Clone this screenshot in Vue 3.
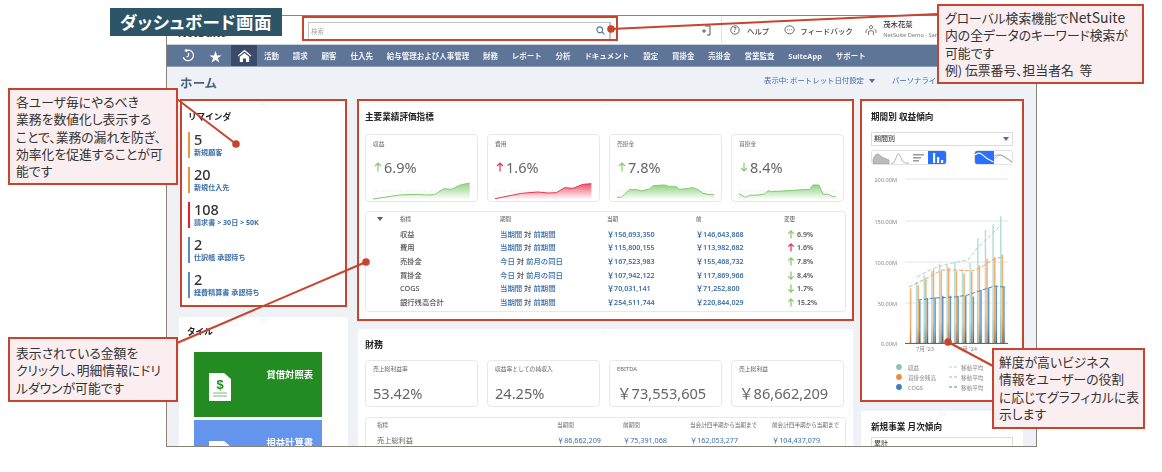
<script setup>
const nav = ['活動','請求','顧客','仕入先','給与管理および人事管理','財務','レポート','分析','ドキュメント','設定','買掛金','売掛金','営業監査','SuiteApp','サポート']
const reminders = [
  { n: '5', label: '新規顧客', color: '#f0923c' },
  { n: '20', label: '新規仕入先', color: '#f0923c' },
  { n: '108', label: '請求書 > 30日 > 50K', color: '#ea1c2a' },
  { n: '2', label: '仕訳帳 承認待ち', color: '#5a8db5' },
  { n: '2', label: '経費精算書 承認待ち', color: '#5a8db5' },
]
const G = '#7fcb6e', R = '#e8354f'
const kpis = [
  { label: '収益', value: '6.9%', dir: 'up', color: G, pts: [[55,212],[135,200],[190,198],[215,200],[240,199],[268,181],[290,183],[320,169],[345,164]] },
  { label: '費用', value: '1.6%', dir: 'up', color: R, pts: [[55,211],[134,195],[184,191],[214,194],[239,193],[264,178],[289,180],[319,168],[344,166]] },
  { label: '売掛金', value: '7.8%', dir: 'up', color: G, pts: [[55,207],[68,207],[78,197],[93,184],[116,184],[128,188],[153,182],[163,172],[198,170],[213,175],[233,175],[243,183],[263,181],[283,178],[298,184],[313,195],[328,198],[346,199]] },
  { label: '買掛金', value: '8.4%', dir: 'down', color: G, pts: [[55,196],[74,207],[87,201],[112,200],[132,197],[142,187],[152,190],[202,187],[267,183],[277,170],[295,170],[307,197],[324,198],[334,204],[345,205]] },
]
const line = p => p.map(a => a.join(',')).join(' ')
const area = p => line(p) + ` ${p[p.length-1][0]},214 ${p[0][0]},214`
const rows = [
  ['収益','当期間','前期間','￥156,693,350','￥146,643,868','up',G,'6.9%'],
  ['費用','当期間','前期間','￥115,800,155','￥113,982,682','up',R,'1.6%'],
  ['売掛金','今日','前月の同日','￥167,523,983','￥155,468,732','up',G,'7.8%'],
  ['買掛金','今日','前月の同日','￥107,942,122','￥117,869,966','down',G,'8.4%'],
  ['COGS','当期間','前期間','￥70,031,141','￥71,252,800','down',G,'1.7%'],
  ['銀行残高合計','当期間','前期間','￥254,511,744','￥220,844,029','up',G,'15.2%'],
]
const finance = [
  { label: '売上総利益率', value: '53.42%' },
  { label: '収益率としての純収入', value: '24.25%' },
  { label: 'EBITDA', value: '￥73,553,605' },
  { label: '売上総利益', value: '￥86,662,209' },
]
const grid = [[179,'200.00M'],[221,'150.00M'],[262,'100.00M'],[303,'50.00M']]
const base = 343.3, scale = 0.82
const orange = [67,71,78,90,88,92,88,85,87,95,103,105,108]
const teal = [0,75,83,88,97,95,99,90,98,128,138,145,155]
const blue = [0,52,55,56,58,58,58,58,57,65,68,70,70]
const bar = (arr, off) => arr.map((v, i) => ({ x: 910 + 7.65 * i + off, y: base - v * scale, h: v * scale }))
const series = [
  { id: 'bt', top: '#b4dfd8', low: '#8fb8b2', bars: bar(teal, -1.8) },
  { id: 'bo', top: '#f4ad70', low: '#b8763f', bars: bar(orange, -.2) },
  { id: 'bb', top: '#5b9aca', low: '#35607f', bars: bar(blue, 1.4) },
]
const avgs = [
  { c: '#a5d8d0', p: '917,277 932,269 948,264 968,260 978,247 988,238 1000,226' },
  { c: '#f2a163', p: '909,287 925,279 942,270 955,270 972,271 982,267 992,260 1002,257' },
  { c: '#4a88bb', p: '918,300 935,298 955,297 968,295 982,290 995,286 1003,287' },
]
const legend = [
  { y: 367, c: '#8cc4bb', t: '収益', d: '#a5d8d0' },
  { y: 377, c: '#e98d45', t: '買掛金残高', d: '#f2a163' },
  { y: 387, c: '#3f7fb3', t: 'COGS', d: '#4a88bb' },
]
</script>

<template>
  <div class="root">
    <div class="screen">
      <header class="top">
        <div class="logo">NetSuite</div>
        <div class="search">
          <span class="ph">検索</span>
          <svg width="9" height="9" viewBox="0 0 10 10"><circle cx="4.2" cy="4.2" r="3.2" fill="none" stroke="#4f7199" stroke-width="1.2"/><path d="M6.6 6.6 9.4 9.4" stroke="#4f7199" stroke-width="1.3"/></svg>
        </div>
        <div class="actions">
          <svg class="recent" width="11" height="11" viewBox="0 0 11 11" fill="none" stroke="#444" stroke-width=".9"><path d="M4 1h5v9H6M1 6h4M3 4v4"/></svg>
          <span class="divider"></span>
          <svg width="10" height="10" viewBox="0 0 10 10"><circle cx="5" cy="5" r="4.2" fill="none" stroke="#444" stroke-width=".8"/><text x="5" y="7.4" font-size="6.5" text-anchor="middle" fill="#444">?</text></svg>
          <span class="act help">ヘルプ</span>
          <svg width="11" height="10" viewBox="0 0 11 10"><ellipse cx="5.5" cy="4.8" rx="4.6" ry="4" fill="none" stroke="#444" stroke-width=".8"/><path d="M3.3 4.8h.8M5.1 4.8h.8M6.9 4.8h.8" stroke="#444" stroke-width=".8"/></svg>
          <span class="act fb">フィードバック</span>
          <svg class="user" width="12" height="12" viewBox="0 0 12 12" fill="none" stroke="#555" stroke-width=".8"><circle cx="6" cy="3.2" r="1.6"/><path d="M3.6 11V7.4q2.4-1.6 4.8 0V11M1 9V6.4l1.6-1M11 9V6.4l-1.6-1"/></svg>
          <div class="who"><b>茂木花菜</b><small>NetSuite Demo - Sandbox</small></div>
        </div>
      </header>

      <nav class="nav">
        <span class="ni">
          <svg width="15" height="15" viewBox="0 0 15 15" fill="none" stroke="#fff" stroke-width="1.2"><path d="M2.2 9.2a5.3 5.3 0 1 0 2.6-6.6"/><path d="M7.5 4.8v3.2l-2 1M5.4 1 4.2 2.8l2 1" /></svg>
        </span>
        <span class="ni star">★</span>
        <span class="ni home">
          <svg width="15" height="14" viewBox="0 0 15 14"><path d="M7.5.8 .6 6.4l.8 1L7.5 2.4l6.1 5 .8-1z" fill="#fff"/><path d="M2.8 7.8 7.5 4l4.7 3.8V13H9V9.6H6V13H2.8z" fill="#fff"/></svg>
        </span>
        <span v-for="n in nav" :key="n" class="nt">{{ n }}</span>
      </nav>

      <main class="page">
        <div class="pagehead">
          <h1>ホーム</h1>
          <div class="view">表示中: ポートレット日付設定 <i class="tri"></i><span class="pers">パーソナライズ</span></div>
        </div>
        <div class="cols">
          <div class="col">
            <section class="card hl rem">
              <i class="grip">∷∷</i>
              <h2>リマインダ</h2>
              <div v-for="r in reminders" :key="r.label + r.n" class="ritem" :style="{ borderColor: r.color }">
                <div class="rn">{{ r.n }}</div>
                <div class="rl">{{ r.label }}</div>
              </div>
            </section>
            <section class="card tiles">
              <i class="grip">∷∷</i>
              <h2>タイル</h2>
              <div class="tile green">
                <svg width="22" height="28" viewBox="0 0 22 28"><path d="M0 0h15l7 6v22H0z" fill="#fff"/><text x="11" y="16" font-size="13" font-weight="700" text-anchor="middle" fill="#228b22" font-family="Liberation Sans">$</text><path d="M4 20h14M4 23h14" stroke="#7dbb7d" stroke-width="1"/></svg>
                <span>貸借対照表</span>
              </div>
              <div class="tile bluet">
                <svg width="22" height="28" viewBox="0 0 22 28"><path d="M0 0h15l7 6v22H0z" fill="#fff"/></svg>
                <span>損益計算書</span>
              </div>
            </section>
          </div>

          <div class="col midgap">
            <section class="card hl main">
              <i class="grip">∷∷</i>
              <h2>主要業績評価指標</h2>
              <div class="kpis">
                <div v-for="k in kpis" :key="k.label" class="kpi">
                  <div class="klabel">{{ k.label }}</div>
                  <div class="kval">
                    <svg width="8" height="10" viewBox="0 0 8 10" fill="none" :stroke="k.color" stroke-width="1.2">
                      <path v-if="k.dir === 'up'" d="M4 9.5V1M1 4l3-3 3 3"/>
                      <path v-else d="M4 .5V9M1 6l3 3 3-3"/>
                    </svg>{{ k.value }}
                  </div>
                  <svg class="spark" width="97" height="20" viewBox="55 155 291 60">
                    <defs>
                      <linearGradient :id="'f' + k.label" x1="0" y1="0" x2="0" y2="1">
                        <stop offset="0" :stop-color="k.color" stop-opacity=".85"/>
                        <stop offset="1" :stop-color="k.color" stop-opacity="0"/>
                      </linearGradient>
                    </defs>
                    <polygon :points="area(k.pts)" :fill="'url(#f' + k.label + ')'"/>
                    <line x1="55" y1="188" x2="346" y2="188" stroke="#ccc" stroke-width="1.5" stroke-dasharray="4 5"/>
                    <polyline :points="line(k.pts)" fill="none" :stroke="k.color" stroke-width="3"/>
                  </svg>
                </div>
              </div>
              <div class="tbl">
                <div class="trow thead">
                  <span><i class="tri dark"></i></span><span>指標</span><span>期間</span><span>当期</span><span>前</span><span>変更</span>
                </div>
                <div v-for="r in rows" :key="r[0]" class="trow">
                  <span></span>
                  <span class="name">{{ r[0] }}</span>
                  <span class="per"><a>{{ r[1] }}</a> 対 <a>{{ r[2] }}</a></span>
                  <a class="amt">{{ r[3] }}</a>
                  <a class="amt">{{ r[4] }}</a>
                  <span class="chg">
                    <svg width="8" height="9" viewBox="0 0 8 10" fill="none" :stroke="r[6]" stroke-width="1.4">
                      <path v-if="r[5] === 'up'" d="M4 9.5V1M1 4l3-3 3 3"/>
                      <path v-else d="M4 .5V9M1 6l3 3 3-3"/>
                    </svg>{{ r[7] }}
                  </span>
                </div>
              </div>
            </section>
            <section class="card fin">
              <i class="grip">∷∷</i>
              <h2>財務</h2>
              <div class="kpis fkpis">
                <div v-for="f in finance" :key="f.label" class="kpi fk">
                  <div class="klabel">{{ f.label }}</div>
                  <div class="fval">{{ f.value }}</div>
                </div>
              </div>
              <div class="ftbl">
                <div class="frow fhead"><span>指標</span><span>当期間</span><span>前期間</span><span>当会計四半期から当期まで</span><span>前会計四半期から当期まで</span></div>
                <div class="frow"><span class="fname">売上総利益</span><a>￥86,662,209</a><a>￥75,391,068</a><a>￥162,053,277</a><a>￥104,437,079</a></div>
              </div>
            </section>
          </div>

          <div class="col">
            <section class="card hl trend">
              <i class="grip">∷∷</i>
              <h2>期間別 収益傾向</h2>
              <div class="select">期間別<i class="tri"></i></div>
              <div class="btnrow">
                <div class="seg">
                  <span><svg width="18" height="14" viewBox="0 0 18 14"><path d="M1 13V8q3-6 5-5t4 3l7 3v4z" fill="#bbb" stroke="#999" stroke-width=".6"/></svg></span>
                  <span><svg width="18" height="14" viewBox="0 0 18 14"><path d="M0 13q3 0 5-6t3-4 3 6 7 3" fill="none" stroke="#aaa" stroke-width=".9"/></svg></span>
                  <span><svg width="18" height="14" viewBox="0 0 18 14" fill="#999"><path d="M4 3h11v1.6H4zM4 6h8v1.6H4zM4 9h6v1.6H4z"/></svg></span>
                  <span class="on"><svg width="18" height="14" viewBox="0 0 18 14" fill="#fff"><path d="M5 2h2.2v10H5zM9 6h2.2v6H9zM13 9h2.2v3H13z"/></svg></span>
                </div>
                <div class="seg two">
                  <span class="on"><svg width="19" height="14" viewBox="0 0 19 14"><path d="M0 4q4-4 8 0t11 7" fill="none" stroke="#fff" stroke-width="1.1"/></svg></span>
                  <span><svg width="19" height="14" viewBox="0 0 19 14" fill="none" stroke="#aaa" stroke-width=".9"><path d="M0 5q5-3 9 0t10 6"/><path d="M0 8q5-6 10-3t9 7"/></svg></span>
                </div>
              </div>
              <svg class="chart" width="162" height="229" viewBox="861 172 162 229">
                <defs>
                  <linearGradient v-for="s in series" :id="s.id" :key="s.id" x1="0" y1="0" x2="0" y2="1">
                    <stop offset="0" :stop-color="s.top"/>
                    <stop offset=".7" :stop-color="s.top"/>
                    <stop offset="1" :stop-color="s.low"/>
                  </linearGradient>
                </defs>
                <g v-for="g in grid" :key="g[1]">
                  <line x1="905" x2="1008" :y1="g[0]" :y2="g[0]" stroke="#e4e4e4"/>
                  <text x="897" :y="g[0] + 2.5" class="ct" text-anchor="end">{{ g[1] }}</text>
                </g>
                <text x="897" y="346" class="ct" text-anchor="end">0.00M</text>
                <g v-for="s in series" :key="s.id">
                  <rect v-for="b in s.bars" :key="b.x" :x="b.x" :y="b.y" width="1.5" :height="b.h" :fill="'url(#' + s.id + ')'"/>
                </g>
                <polyline v-for="a in avgs" :key="a.c" :points="a.p" fill="none" :stroke="a.c" stroke-width="1" stroke-dasharray="4 2"/>
                <line x1="905" x2="1008" y1="343.4" y2="343.4" stroke="#555" stroke-width="1"/>
                <text x="925" y="351" class="ct" text-anchor="middle">7月 '23</text>
                <text x="968" y="351" class="ct" text-anchor="middle">4月 '24</text>
                <g v-for="l in legend" :key="l.t">
                  <circle cx="899" :cy="l.y" r="2.9" :fill="l.c"/>
                  <text x="908" :y="l.y + 2.6" class="ct">{{ l.t }}</text>
                  <line x1="949" x2="957" :y1="l.y" :y2="l.y" :stroke="l.d" stroke-dasharray="3 2"/>
                  <text x="961" :y="l.y + 2.6" class="ct">移動平均</text>
                </g>
              </svg>
            </section>
            <section class="card monthly">
              <i class="grip">∷∷</i>
              <h2>新規事業 月次傾向</h2>
              <div class="select">累計</div>
            </section>
          </div>
        </div>
      </main>
    </div>

    <div class="searchmark"></div>

    <svg class="leaders" width="1162" height="472" viewBox="0 0 1162 472">
      <g stroke="#c8442f" stroke-width="2" fill="#c8442f">
        <line x1="177" y1="99" x2="236" y2="144"/><circle cx="236" cy="144" r="3.8" stroke="none"/>
        <line x1="177" y1="343" x2="366" y2="262"/><circle cx="366" cy="262" r="3.8" stroke="none"/>
        <line x1="938" y1="14" x2="611" y2="29"/><circle cx="611" cy="29" r="3.8" stroke="none"/>
        <line x1="993" y1="366" x2="948" y2="342"/><circle cx="948" cy="342" r="3.8" stroke="none"/>
      </g>
    </svg>

    <div class="title">ダッシュボード画面</div>
    <div class="note n1">グローバル検索機能で<span class="ns">NetSuite</span><br>内の全データのキーワード検索が<br>可能です<br>例) 伝票番号、担当者名&nbsp;&nbsp;等</div>
    <div class="note n2">各ユーザ毎にやるべき<br>業務を数値化し表示する<br>ことで、業務の漏れを防ぎ、<br>効率化を促進することが可<br>能です</div>
    <div class="note n3">表示されている金額を<br>クリックし、明細情報にドリ<br>ルダウンが可能です</div>
    <div class="note n4">鮮度が高いビジネス<br>情報をユーザーの役割<br>に応じてグラフィカルに表<br>示します</div>
  </div>
</template>

<style>
html, body { margin: 0; background: #fff; }
</style>

<style scoped>
* { box-sizing: border-box; }
.root {
  position: relative; width: 1162px; height: 472px; overflow: hidden; background: #fff;
  font-family: "Noto Sans", "Noto Sans CJK JP", sans-serif; color: #333;
}
.screen {
  margin: 15px 0 0 166px; width: 871px; height: 432px; overflow: hidden;
  border: 1px solid #8b8378; background: #eef1f5; filter: blur(.35px);
  display: flex; flex-direction: column;
}
.top { height: 28px; background: #fff; display: flex; align-items: center; flex: none; }
.logo { width: 141px; padding: 5px 0 0 11px; font: 700 12px "Liberation Sans", sans-serif; color: #333; }
.search {
  width: 303px; height: 18px; border: 1px solid #c4c4c4; border-right-width: 2px; display: flex; align-items: center;
  justify-content: space-between; padding: 0 4px 0 2px; margin-top: 1px;
}
.ph { font-size: 6.5px; color: #aaa; }
.actions { display: flex; align-items: center; height: 100%; flex: 1; padding-left: 90px; font-size: 8px; font-weight: 500; color: #444; }
.divider { width: 1px; height: 26px; background: #e2e2e2; margin: 0 8px 0 9px; }
.act { white-space: nowrap; font-size: 7.4px; }
.help { margin: 0 15px 0 7px; }
.fb { margin: 0 12px 0 5px; letter-spacing: .2px; }
.user { margin-right: 6px; }
.who { display: flex; flex-direction: column; line-height: 11px; white-space: nowrap; }
.who b { font-size: 7.4px; font-weight: 500; color: #333; }
.who small { font-size: 5.6px; color: #888; }

.nav {
  height: 23px; flex: none; background: #5f7598; border-top: 1px solid #c9d2de; border-bottom: 1px solid #8ea0b8;
  display: flex; align-items: center; color: #fff; font-weight: 700; font-size: 7.5px; padding-left: 10px;
}
.ni { display: flex; align-items: center; justify-content: center; height: 100%; }
.ni:first-child { width: 23px; }
.star { width: 27px; font-size: 13px; font-weight: 400; margin-left: 2px; }
.home { width: 26px; background: #3a4a68; margin-left: 2px; margin-right: 7px; }
.nt { margin-right: 13.8px; white-space: nowrap; color: #f1f4f8; }

.page { flex: 1; padding: 0 13px; min-height: 0; }
.pagehead { height: 33px; display: flex; justify-content: space-between; position: relative; }
h1 { margin: 0; font-size: 12.5px; line-height: 18px; padding-top: 8px; font-weight: 700; color: #4d5f7e; font-feature-settings: "palt"; letter-spacing: .4px; }
.view { position: absolute; left: 584px; top: 6px; font-size: 7.4px; color: #3f6ea6; white-space: nowrap; line-height: 14px; }
.pers { margin-left: 17px; }
.tri { display: inline-block; width: 0; height: 0; border-left: 3.5px solid transparent; border-right: 3.5px solid transparent; border-top: 4px solid #4f6f9a; margin-left: 3px; }
.tri.dark { border-top-color: #4c5f85; margin: 0; }
.cols { display: grid; grid-template-columns: 169px 496px 162px; column-gap: 8px; align-items: start; }
.midgap { margin-left: 1px; }
.col { display: flex; flex-direction: column; }
.card { background: #fff; border-radius: 2px; position: relative; }
.hl { outline: 2.5px solid #c8442f; outline-offset: -1.5px; border-radius: 0; }
.grip { position: absolute; top: -1px; left: 50%; transform: translateX(-50%); font: 400 5px/8px "DejaVu Sans", sans-serif; color: #bbb; }
h2 { margin: 0; font-size: 8.6px; line-height: 12px; font-weight: 700; color: #222; }

.rem { height: 206px; width: 165px; margin-left: 1px; padding: 11px 7px 0; }
.rem h2 { margin-bottom: 9px; }
.ritem { border-left: 2px solid; height: 26px; margin-bottom: 9px; padding-left: 4px; }
.rn { font-size: 14.5px; line-height: 15px; color: #333; font-weight: 500; }
.rl { font-size: 7.1px; line-height: 9px; font-weight: 700; color: #3a6ea8; margin-top: 1px; white-space: nowrap; }

.tiles { margin-top: 11px; height: 140px; padding: 9px 8px 0; margin-left: -1px; width: 169px; }
.tiles h2 { margin-bottom: 14px; }
.tile { width: 128px; height: 65px; margin: 0 0 3px 7px; display: flex; align-items: flex-start; justify-content: space-between; padding: 15px 9px 0 15px; color: #fff; font-size: 9.3px; font-weight: 700; }
.tile svg { margin-top: 6px; }
.green { background: #228b22; }
.bluet { background: #6495ed; }

.main { height: 220px; padding: 11px 7px 0; }
.kpis { display: grid; grid-template-columns: repeat(4, 113px); column-gap: 9px; margin-top: 11px; }
.kpi { height: 68px; border: 1px solid #e8e8e8; border-radius: 4px; padding: 5px 7px 0; position: relative; }
.klabel { font-size: 5.8px; line-height: 8px; color: #666; white-space: nowrap; }
.kval { margin-top: 9px; font-size: 14.5px; line-height: 20px; color: #666; display: flex; align-items: center; gap: 2px; padding-left: 1px; }
.spark { display: block; margin-top: 3px; overflow: visible; }
.tbl { margin-top: 9px; height: 101px; border: 1px solid #e8e8e8; border-radius: 4px; padding-left: 11px; }
.trow { display: grid; grid-template-columns: 23px 100px 107px 89px 88px 50px; height: 13.6px; align-items: center; font-size: 7.4px; line-height: 13px; white-space: nowrap; color: #555; font-weight: 500; }
.thead { font-size: 5.6px; height: 14px; margin-bottom: 1.6px; font-weight: 400; padding-top: 0; }
.name { font-size: 7.3px; }
.per a, .amt { color: #3a6ea8; }
.amt { font-weight: 600; font-size: 7.1px; }
.chg { font-size: 7px; font-weight: 600; padding-left: 3px; display: flex; align-items: center; gap: 2px; }

.fin { margin-top: 9px; height: 130px; padding: 10px 7px 0; }
.fin h2 { font-size: 9px; }
.fkpis { margin-top: 9px; }
.fk { height: 47px; padding-top: 4px; }
.fval { font-size: 14.6px; line-height: 20px; color: #666; margin-top: 10px; white-space: nowrap; }
.ftbl { margin-top: 10px; border: 1px solid #e8e8e8; border-radius: 4px; height: 50px; padding-left: 11px; }
.frow { display: grid; grid-template-columns: 180px 66px 67px 82px 80px; font-size: 7.2px; height: 13px; align-items: center; white-space: nowrap; }
.fhead { font-size: 5.6px; color: #666; height: 14px; margin-bottom: 1px; }
.fname { color: #666; font-size: 7.2px; }
.frow a { color: #3a6ea8; }

.trend { height: 301px; padding: 11px 10px 0; }
.select { border: 1px solid #ddd; height: 14px; font-size: 7px; line-height: 12px; padding: 0 2px; color: #444; position: relative; background: #fff; font-weight: 500; }
.select .tri { position: absolute; right: 3px; top: 4px; }
.trend h2 { margin-bottom: 9px; }
.btnrow { display: flex; justify-content: space-between; margin-top: 4px; }
.seg { display: flex; border: 1px solid #e2e2e2; border-radius: 3px; height: 15px; overflow: hidden; }
.seg span { width: 18.5px; height: 100%; display: flex; align-items: center; justify-content: center; }
.seg .on { background: #2970ff; }
.seg svg { display: block; }
.chart { display: block; margin: 7px 0 0 -10px; overflow: visible; }
.ct { font-size: 5.6px; fill: #888; }
.monthly { margin-top: 10px; height: 40px; padding: 10px 10px 0; }
.monthly h2 { margin-bottom: 4px; }

.searchmark { position: absolute; left: 302px; top: 16px; width: 316px; height: 25px; border: 2.5px solid #c8442f; }
.leaders { position: absolute; left: 0; top: 0; pointer-events: none; }
.title { position: absolute; left: 110px; top: 8px; width: 172px; height: 28px; background: #2d5567; color: #fff; font-weight: 700; font-size: 17.5px; line-height: 28px; text-align: center; white-space: nowrap; font-feature-settings: "palt"; letter-spacing: .5px; }
.note { position: absolute; background: #fbeef0; border: 2.5px solid #c8442f; padding: 3px 6px; font-size: 12.8px; line-height: 17.3px; color: #333; white-space: nowrap; font-feature-settings: "palt"; font-family: "Noto Sans CJK JP", "Noto Sans", sans-serif; }
.ns { font-size: 14px; }
.n1 { left: 937px; top: 4px; width: 207px; height: 80px; }
.n2 { left: 8px; top: 88px; width: 170px; height: 97px; }
.n3 { left: 8px; top: 337px; width: 170px; height: 65px; padding-top: 5px; }
.n4 { left: 992px; top: 348px; width: 153px; height: 81px; padding-left: 5px; }
</style>
